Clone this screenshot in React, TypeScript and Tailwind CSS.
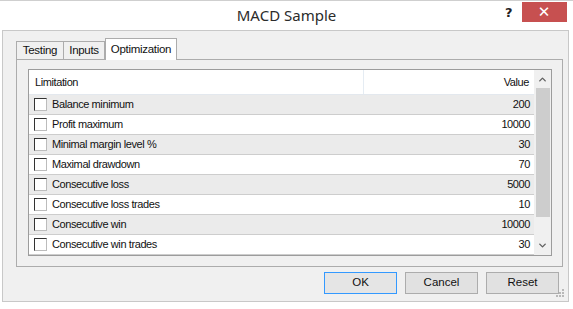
import { ChevronUp, ChevronDown } from 'lucide-react';

const rows: [string, string][] = [
  ['Balance minimum', '200'],
  ['Profit maximum', '10000'],
  ['Minimal margin level %', '30'],
  ['Maximal drawdown', '70'],
  ['Consecutive loss', '5000'],
  ['Consecutive loss trades', '10'],
  ['Consecutive win', '10000'],
  ['Consecutive win trades', '30'],
];

function Checkbox() {
  return (
    <div className="w-[13px] h-[13px] bg-white border border-t-[#333] border-l-[#333] border-r-[#bcbcbc] border-b-[#bcbcbc] shrink-0" />
  );
}

export default function App() {
  return (
    <div className="w-[573px] h-[309px] bg-white border-t border-[#cfcfcf] flex flex-col font-['Liberation_Sans',Arial,sans-serif] text-[11px] text-[#111]">
      {/* Title bar */}
      <div className="h-[29px] flex items-start">
        <div className="w-[73px]" />
        <div className="flex-1 text-center pt-[4px] text-[15px] text-[#2b2b2b] font-['Noto_Sans',sans-serif] leading-[20px]">
          MACD Sample
        </div>
        <div className="w-[73px] flex items-start pt-[1px]">
          <span className="ml-[5px] mt-[3px] text-[13px] font-bold text-[#222] leading-[16px] font-['DejaVu_Sans',sans-serif]">?</span>
          <div className="ml-[9px] w-[45px] h-[20px] bg-[#c75050] flex items-center justify-center text-white text-[15px] font-['DejaVu_Sans',sans-serif] leading-none">
            ✕
          </div>
        </div>
      </div>

      {/* Client area */}
      <div className="relative ml-[2px] mr-[4px] h-[272px] border border-[#c8c8c8] bg-[#f0f0f0] flex flex-col">
        {/* Tabs */}
        <div className="pt-[7px] pl-[13px] h-[28px] flex items-end text-[11.5px] tracking-[-0.3px]">
          <div className="w-[48px] h-[18px] border border-b-0 border-[#acacac] bg-[#f0f0f0] flex items-center justify-center">Testing</div>
          <div className="w-[41px] h-[18px] border border-l-0 border-b-0 border-[#acacac] bg-[#f0f0f0] flex items-center justify-center">Inputs</div>
          <div className="relative z-10 -mb-px h-[22px] w-[72px] border border-b-0 border-[#acacac] bg-white flex justify-center pt-[2px]">Optimization</div>
        </div>

        {/* Tab panel */}
        <div className="ml-[13px] mr-[5px] h-[208px] border border-[#acacac] bg-[#f0f0f0] pl-[11px] pr-[10px] pt-[9px]">
          {/* List */}
          <div className="h-[187px] border border-[#9c9c9c] bg-white flex tracking-[-0.4px]">
            <div className="flex-1 flex flex-col">
              <div className="h-[25px] border-b border-[#e3e8ee] flex">
                <div className="w-[335px] border-r border-[#e5ecf3] flex items-center pl-[6px]">Limitation</div>
                <div className="flex-1 flex items-center justify-end pr-[5px]">Value</div>
              </div>
              {rows.map(([label, value], i) => (
                <div
                  key={label}
                  className={`h-[20px] border-b border-[#cdcdcd] flex items-center ${i % 2 === 0 ? 'bg-[#ebebeb]' : 'bg-white'}`}
                >
                  <div className="w-[335px] flex items-center pl-[5px] gap-[5px]">
                    <Checkbox />
                    <span>{label}</span>
                  </div>
                  <div className="flex-1 text-right pr-[4px]">{value}</div>
                </div>
              ))}
            </div>
            {/* Scrollbar */}
            <div className="w-[17px] bg-[#f0f0f0] flex flex-col items-center">
              <div className="h-[17px] flex items-center justify-center mt-[1px]">
                <ChevronUp className="w-[11px] h-[11px] text-[#606060]" strokeWidth={3} />
              </div>
              <div className="w-[14px] h-[129px] bg-[#cdcdcd]" />
              <div className="flex-1" />
              <div className="h-[17px] flex items-center justify-center mb-[1px]">
                <ChevronDown className="w-[11px] h-[11px] text-[#606060]" strokeWidth={3} />
              </div>
            </div>
          </div>
        </div>

        {/* Buttons */}
        <div className="mt-[5px] pr-[9px] flex justify-end gap-[8px]">
          <button className="w-[73px] h-[22px] border border-[#3399ff] bg-[#e5e5e5] text-[11.5px] text-[#111]">OK</button>
          <button className="w-[73px] h-[22px] border border-[#acacac] bg-[#e1e1e1] text-[11.5px] text-[#111]">Cancel</button>
          <button className="w-[73px] h-[22px] border border-[#acacac] bg-[#e1e1e1] text-[11.5px] text-[#111]">Reset</button>
        </div>

        {/* Size grip */}
        <svg className="absolute right-[3px] bottom-[3px]" width="9" height="9" viewBox="0 0 9 9">
          <rect x="6" y="0" width="2" height="2" fill="#b8b8b8" />
          <rect x="3" y="3" width="2" height="2" fill="#b8b8b8" />
          <rect x="6" y="3" width="2" height="2" fill="#b8b8b8" />
          <rect x="0" y="6" width="2" height="2" fill="#b8b8b8" />
          <rect x="3" y="6" width="2" height="2" fill="#b8b8b8" />
          <rect x="6" y="6" width="2" height="2" fill="#b8b8b8" />
        </svg>
      </div>
    </div>
  );
}
